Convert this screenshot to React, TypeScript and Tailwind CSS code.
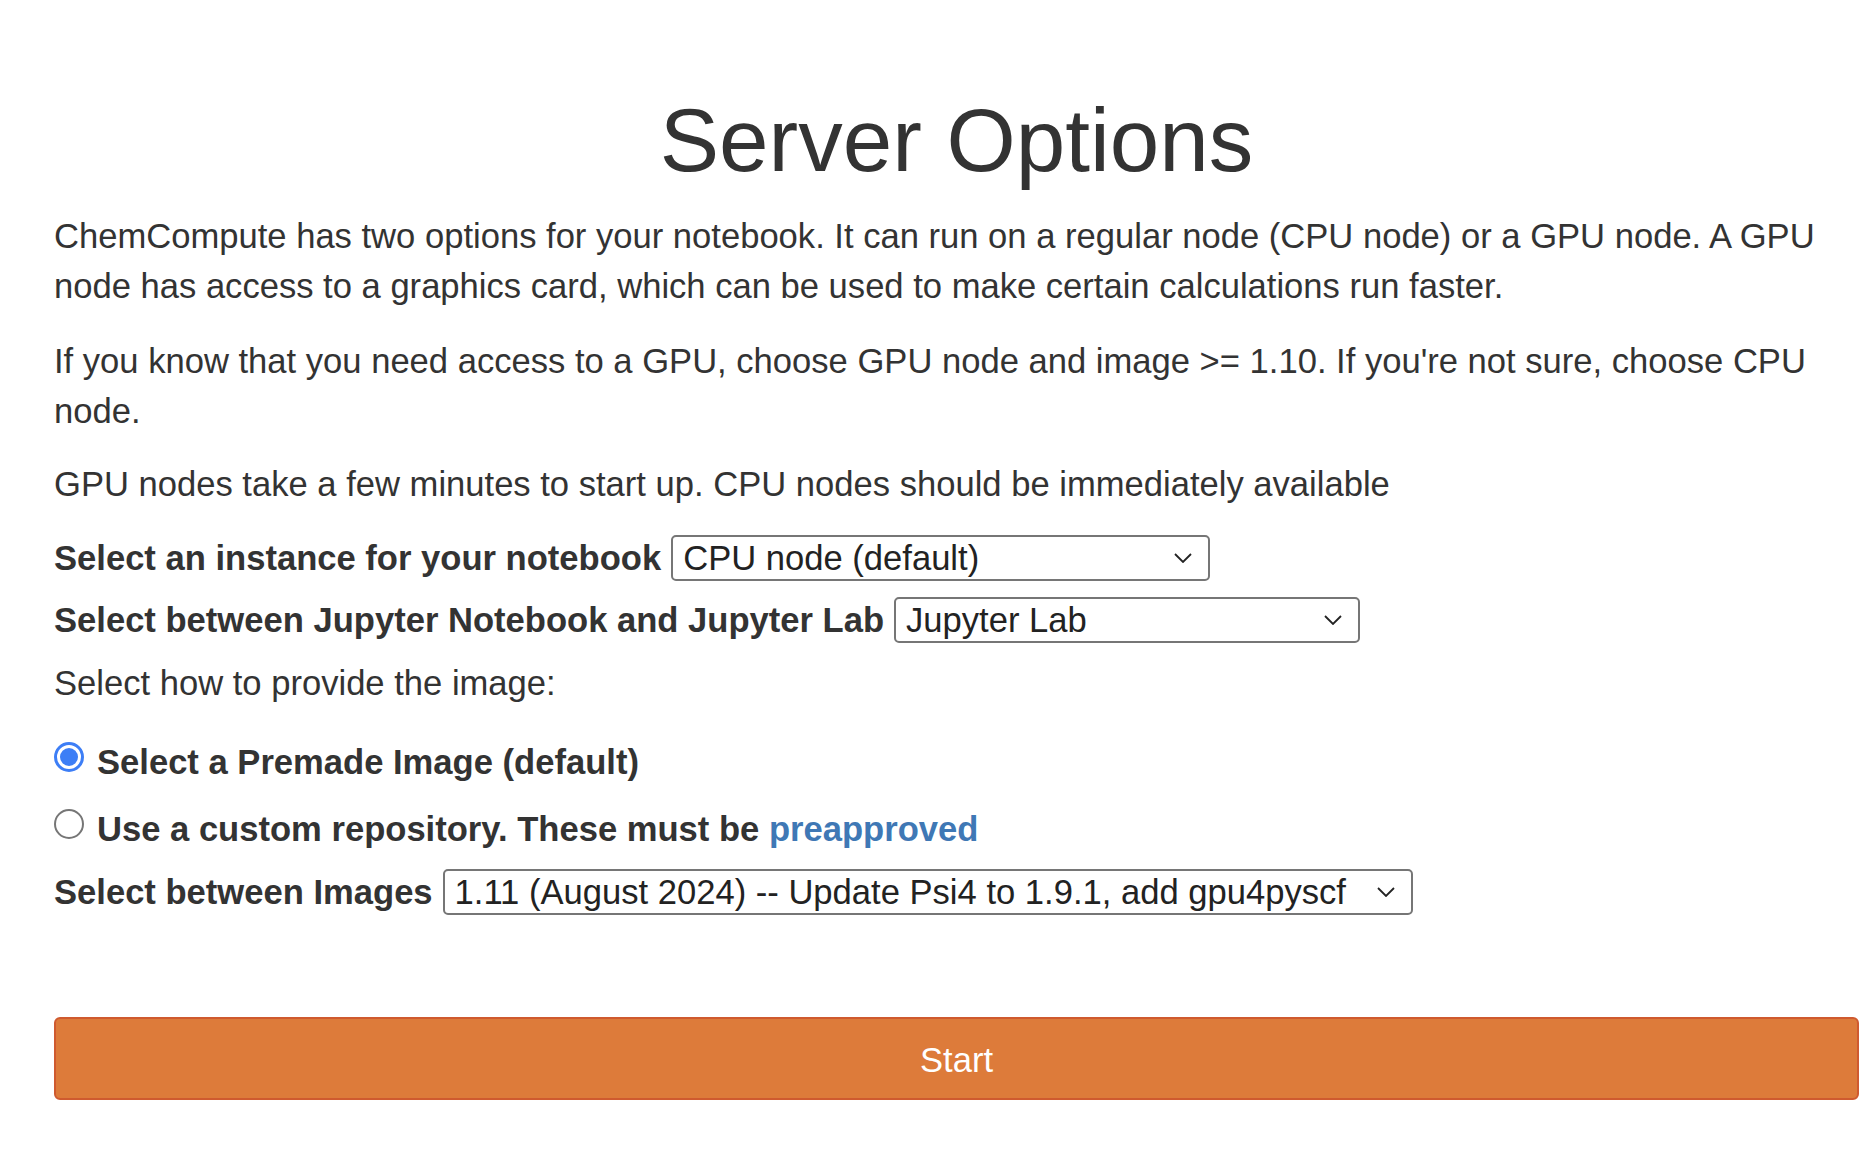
import { useState } from "react";

function Chevron() {
  return (
    <svg
      className="pointer-events-none absolute right-[18px] top-1/2 -translate-y-1/2"
      width="18"
      height="10"
      viewBox="0 0 18 10"
      fill="none"
    >
      <path d="M1 1l8 8 8-8" stroke="#222" strokeWidth="1.8" />
    </svg>
  );
}

function FakeSelect({
  width,
  value,
  options,
  onChange,
}: {
  width: string;
  value: string;
  options: string[];
  onChange: (v: string) => void;
}) {
  return (
    <div className={`relative ml-[10px] h-[46px] ${width}`}>
      <select
        value={value}
        onChange={(e) => onChange(e.target.value)}
        className="h-full w-full appearance-none rounded-[5px] border-2 border-[#767676] bg-white pl-[10px] pr-[50px] text-[34.6px] leading-[42px] text-[#222] outline-none"
      >
        {options.map((o) => (
          <option key={o}>{o}</option>
        ))}
      </select>
      <Chevron />
    </div>
  );
}

function Radio({ checked }: { checked: boolean }) {
  return checked ? (
    <span className="mb-[10px] flex h-[30px] w-[30px] shrink-0 items-center justify-center rounded-full border-[3px] border-[#3d7ef6] bg-white">
      <span className="h-[18px] w-[18px] rounded-full bg-[#3d7ef6]" />
    </span>
  ) : (
    <span className="mb-[10px] h-[30px] w-[30px] shrink-0 rounded-full border-2 border-[#767676] bg-white" />
  );
}

export default function App() {
  const [instance, setInstance] = useState("CPU node (default)");
  const [ui, setUi] = useState("Jupyter Lab");
  const [source, setSource] = useState("premade");
  const [image, setImage] = useState(
    "1.11 (August 2024) -- Update Psi4 to 1.9.1, add gpu4pyscf"
  );

  return (
    <main
      className="min-h-screen bg-white text-[#333]"
      style={{ fontFamily: '"Liberation Sans", Arial, sans-serif' }}
    >
      <div className="ml-[54px] w-[1805px] pt-[91px]">
        <h1 className="text-center text-[89px] font-normal leading-[98px]">
          Server Options
        </h1>

        <p className="mt-[22px] text-[34.6px] leading-[50px]">
          ChemCompute has two options for your notebook. It can run on a regular
          node (CPU node) or a GPU node. A GPU node has access to a graphics
          card, which can be used to make certain calculations run faster.
        </p>
        <p className="mt-[25px] text-[34.6px] leading-[50px]">
          If you know that you need access to a GPU, choose GPU node and image
          &gt;= 1.10. If you're not sure, choose CPU node.
        </p>
        <p className="mt-[23px] text-[34.6px] leading-[50px]">
          GPU nodes take a few minutes to start up. CPU nodes should be
          immediately available
        </p>

        {/* instance */}
        <div className="mt-[26px] flex h-[46px] items-center">
          <label className="text-[34.6px] font-bold leading-[50px]">
            Select an instance for your notebook
          </label>
          <FakeSelect
            width="w-[539px]"
            value={instance}
            onChange={setInstance}
            options={["CPU node (default)", "GPU node"]}
          />
        </div>

        {/* notebook vs lab */}
        <div className="mt-[16px] flex h-[46px] items-center">
          <label className="text-[34.6px] font-bold leading-[50px]">
            Select between Jupyter Notebook and Jupyter Lab
          </label>
          <FakeSelect
            width="w-[466px]"
            value={ui}
            onChange={setUi}
            options={["Jupyter Lab", "Jupyter Notebook"]}
          />
        </div>

        <p className="mt-[15px] text-[34.6px] leading-[50px]">
          Select how to provide the image:
        </p>

        <label
          className="mt-[29px] flex h-[50px] cursor-pointer items-center gap-[13px]"
          onClick={() => setSource("premade")}
        >
          <Radio checked={source === "premade"} />
          <span className="text-[34.6px] font-bold leading-[50px]">
            Select a Premade Image (default)
          </span>
        </label>

        <label
          className="mt-[17px] flex h-[50px] cursor-pointer items-center gap-[13px]"
          onClick={() => setSource("custom")}
        >
          <Radio checked={source === "custom"} />
          <span className="text-[34.6px] font-bold leading-[50px]">
            Use a custom repository. These must be{" "}
            <a href="#" className="text-[#3f78b5]">
              preapproved
            </a>
          </span>
        </label>

        {/* image */}
        <div className="mt-[15px] flex h-[46px] items-center">
          <label className="text-[34.6px] font-bold leading-[50px]">
            Select between Images
          </label>
          <FakeSelect
            width="w-[970px]"
            value={image}
            onChange={setImage}
            options={[
              "1.11 (August 2024) -- Update Psi4 to 1.9.1, add gpu4pyscf",
              "1.10 (March 2024)",
            ]}
          />
        </div>

        <button className="mt-[102px] flex h-[83px] w-full items-center justify-center rounded-[6px] border-2 border-[#cf5a2f] bg-[#dd7b3a] pt-[4px] text-[34.6px] text-white">
          Start
        </button>
      </div>
    </main>
  );
}
